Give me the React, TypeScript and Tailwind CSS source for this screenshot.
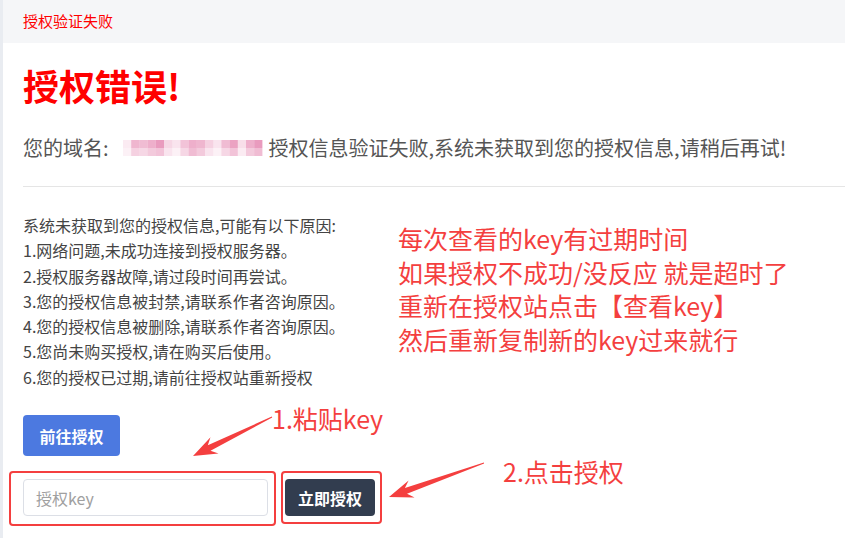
const font = { fontFamily: '"Microsoft YaHei", "Noto Sans CJK SC", "Noto Sans", sans-serif' };

const reasons = [
  "系统未获取到您的授权信息,可能有以下原因:",
  "1.网络问题,未成功连接到授权服务器。",
  "2.授权服务器故障,请过段时间再尝试。",
  "3.您的授权信息被封禁,请联系作者咨询原因。",
  "4.您的授权信息被删除,请联系作者咨询原因。",
  "5.您尚未购买授权,请在购买后使用。",
  "6.您的授权已过期,请前往授权站重新授权",
];

const notes = [
  "每次查看的key有过期时间",
  "如果授权不成功/没反应 就是超时了",
  "重新在授权站点击【查看key】",
  "然后重新复制新的key过来就行",
];

// mosaic over the blurred domain name
const mosaic = [
  [0.15, 0.55, 0.5, 0.6, 0.75, 0.3, 0.2, 0.45, 0.6, 0.55, 0.35, 0.2, 0.5, 0.7, 0.25, 0.6, 0.75],
  [0.1, 0.35, 0.3, 0.4, 0.45, 0.2, 0.1, 0.3, 0.5, 0.4, 0.2, 0.1, 0.3, 0.45, 0.15, 0.4, 0.5],
];

// tapered red annotation arrow, tail -> tip
function arrowPoints(tx: number, ty: number, px: number, py: number) {
  const dx = px - tx;
  const dy = py - ty;
  const len = Math.hypot(dx, dy);
  const ux = dx / len;
  const uy = dy / len;
  const nx = -uy;
  const ny = ux;
  const head = 24;
  const neck = 18;
  const hw = 9;
  const sw = 3;
  const nb = { x: px - ux * neck, y: py - uy * neck };
  const hb = { x: px - ux * head, y: py - uy * head };
  const pts = [
    [tx + nx * 0.4, ty + ny * 0.4],
    [nb.x + nx * sw, nb.y + ny * sw],
    [hb.x + nx * hw, hb.y + ny * hw],
    [px, py],
    [hb.x - nx * hw, hb.y - ny * hw],
    [nb.x - nx * sw, nb.y - ny * sw],
    [tx - nx * 0.4, ty - ny * 0.4],
  ];
  return pts.map((p) => `${p[0].toFixed(1)},${p[1].toFixed(1)}`).join(" ");
}

export default function App() {
  return (
    <div className="h-[538px] w-[845px] overflow-hidden bg-white border-l-[3px] border-[#e9ecf1]" style={font}>
      {/* header */}
      <div className="flex h-[43px] items-center bg-[#f5f6f8] px-5">
        <span className="text-[15px] text-[#ff0000]">授权验证失败</span>
      </div>

      <div className="pl-5">
        <h1 className="mt-[19px] text-[36px] font-bold leading-[46px] text-[#ff0000]">授权错误!</h1>

        <div className="mt-[26px] flex items-center text-[20px] leading-[28px] text-[#555]">
          <span>您的域名:</span>
          <svg width="140" height="18" className="ml-[14px] mr-[6px]">
            {mosaic.map((row, r) =>
              row.map((o, c) => (
                <rect key={`${r}-${c}`} x={c * 8.2} y={r * 8 + 1} width="8.2" height="8" fill="#e27aa8" opacity={o} />
              ))
            )}
          </svg>
          <span>授权信息验证失败,系统未获取到您的授权信息,请稍后再试!</span>
        </div>

        <div className="mt-[24px] h-px bg-[#e5e5e5]" />

        <div className="mt-[26px] flex items-start">
          <div className="w-[375px] shrink-0 text-[16px] leading-[25.3px] text-[#444]">
            {reasons.map((r) => (
              <div key={r} className="whitespace-nowrap">{r}</div>
            ))}
          </div>
          <div className="mt-[9px] shrink-0 text-[25px] leading-[33.5px] text-[#f43f3f]">
            {notes.map((n) => (
              <div key={n} className="whitespace-nowrap">{n}</div>
            ))}
          </div>
        </div>

        <div className="mt-[25px] flex h-[41px] items-start">
          <button className="flex h-[41px] w-[97px] shrink-0 items-center justify-center rounded bg-[#4c79e0] text-[16px] font-bold text-white">
            前往授权
          </button>
          <svg width="84" height="41" className="ml-[68px] shrink-0 overflow-visible">
            <polygon points={arrowPoints(84, 2, 5, 41)} fill="#f43f3f" />
          </svg>
          <span className="-mt-[12px] whitespace-nowrap text-[25px] leading-[30px] text-[#f43f3f]">1.粘贴key</span>
        </div>

        <div className="mt-[15px] flex items-start">
          <div className="-ml-[14px] shrink-0 rounded-sm border-2 border-[#f43f3f] pb-[8px] pl-[12px] pr-[6px] pt-[6px]">
            <div className="flex h-[37px] w-[245px] items-center rounded border border-[#dcdfe6] bg-white pl-[12px] text-[16px] text-[#a0a0a0]">
              授权key
            </div>
          </div>
          <div className="ml-[5px] shrink-0 rounded-sm border-2 border-[#f43f3f] pb-[6px] pl-[2px] pr-[5px] pt-[6px]">
            <button className="flex h-[37px] w-[90px] items-center justify-center rounded bg-[#323d4f] text-[16px] font-bold text-white">
              立即授权
            </button>
          </div>
          <svg width="100" height="45" className="-mt-[12px] ml-[3px] shrink-0 overflow-visible">
            <polygon points={arrowPoints(99, 4, 4, 38)} fill="#f43f3f" />
          </svg>
          <span className="-mt-[15px] ml-[18px] whitespace-nowrap text-[25px] leading-[30px] text-[#f43f3f]">2.点击授权</span>
        </div>
      </div>
    </div>
  );
}
